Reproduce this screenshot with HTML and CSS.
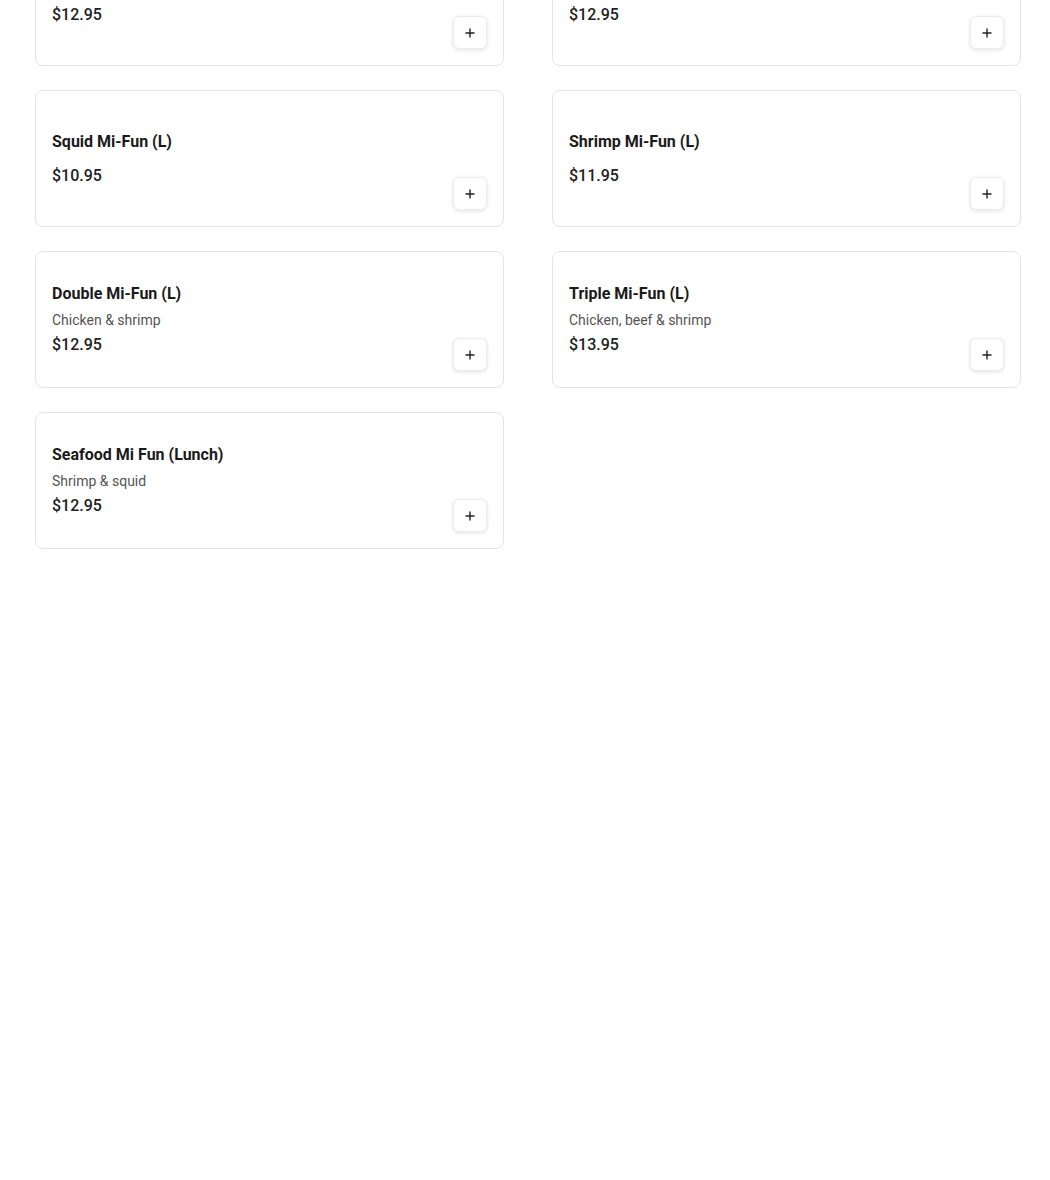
FILE: index.html
```html
<!DOCTYPE html>
<html>
<head>
<meta charset="utf-8">
<link rel="stylesheet" href="styles.css">
</head>
<body>
<div class="grid">
  <div class="card"><div class="info"><div class="title">Chicken Mi-Fun (L)</div><div class="price">$12.95</div></div><button class="add"><svg viewBox="0 0 12 12" width="12" height="12"><path d="M6 1.5v9M1.5 6h9" stroke="#222" stroke-width="1.4"/></svg></button></div>
  <div class="card"><div class="info"><div class="title">Beef Mi-Fun (L)</div><div class="price">$12.95</div></div><button class="add"><svg viewBox="0 0 12 12" width="12" height="12"><path d="M6 1.5v9M1.5 6h9" stroke="#222" stroke-width="1.4"/></svg></button></div>
  <div class="card"><div class="info"><div class="title">Squid Mi-Fun (L)</div><div class="price">$10.95</div></div><button class="add"><svg viewBox="0 0 12 12" width="12" height="12"><path d="M6 1.5v9M1.5 6h9" stroke="#222" stroke-width="1.4"/></svg></button></div>
  <div class="card"><div class="info"><div class="title">Shrimp Mi-Fun (L)</div><div class="price">$11.95</div></div><button class="add"><svg viewBox="0 0 12 12" width="12" height="12"><path d="M6 1.5v9M1.5 6h9" stroke="#222" stroke-width="1.4"/></svg></button></div>
  <div class="card"><div class="info"><div class="title">Double Mi-Fun (L)</div><div class="desc">Chicken &amp; shrimp</div><div class="price">$12.95</div></div><button class="add"><svg viewBox="0 0 12 12" width="12" height="12"><path d="M6 1.5v9M1.5 6h9" stroke="#222" stroke-width="1.4"/></svg></button></div>
  <div class="card"><div class="info"><div class="title">Triple Mi-Fun (L)</div><div class="desc">Chicken, beef &amp; shrimp</div><div class="price">$13.95</div></div><button class="add"><svg viewBox="0 0 12 12" width="12" height="12"><path d="M6 1.5v9M1.5 6h9" stroke="#222" stroke-width="1.4"/></svg></button></div>
  <div class="card"><div class="info"><div class="title">Seafood Mi Fun (Lunch)</div><div class="desc">Shrimp &amp; squid</div><div class="price">$12.95</div></div><button class="add"><svg viewBox="0 0 12 12" width="12" height="12"><path d="M6 1.5v9M1.5 6h9" stroke="#222" stroke-width="1.4"/></svg></button></div>
</div>
</body>
</html>
```
FILE: styles.css
```css
html, body {
  margin: 0;
  padding: 0;
  background: #fff;
  font-family: Roboto, "Liberation Sans", Arial, sans-serif;
  color: #191919;
}
.grid {
  display: grid;
  grid-template-columns: 469px 469px;
  column-gap: 48px;
  row-gap: 24px;
  margin: -71px 0 0 35px;
}
.card {
  position: relative;
  box-sizing: border-box;
  height: 137px;
  border: 1px solid #e4e4e4;
  border-radius: 8px;
  padding: 0 16px;
  display: flex;
  align-items: center;
}
.info {
  display: flex;
  flex-direction: column;
}
.title {
  font-size: 16px;
  font-weight: 700;
  line-height: 22px;
  color: #1a1a1a;
}
.desc {
  font-size: 14px;
  line-height: 20px;
  color: #555;
  margin-top: 5px;
}
.price {
  font-size: 16px;
  font-weight: 500;
  line-height: 22px;
  color: #222;
  margin-top: 12px;
}
.desc + .price {
  margin-top: 4px;
}
.add {
  position: absolute;
  right: 16px;
  bottom: 16px;
  width: 34px;
  height: 33px;
  box-sizing: border-box;
  border: 1px solid #ececec;
  border-radius: 6px;
  background: #fff;
  box-shadow: 0 1px 4px rgba(0,0,0,0.12);
  display: flex;
  align-items: center;
  justify-content: center;
  padding: 0;
}
```
